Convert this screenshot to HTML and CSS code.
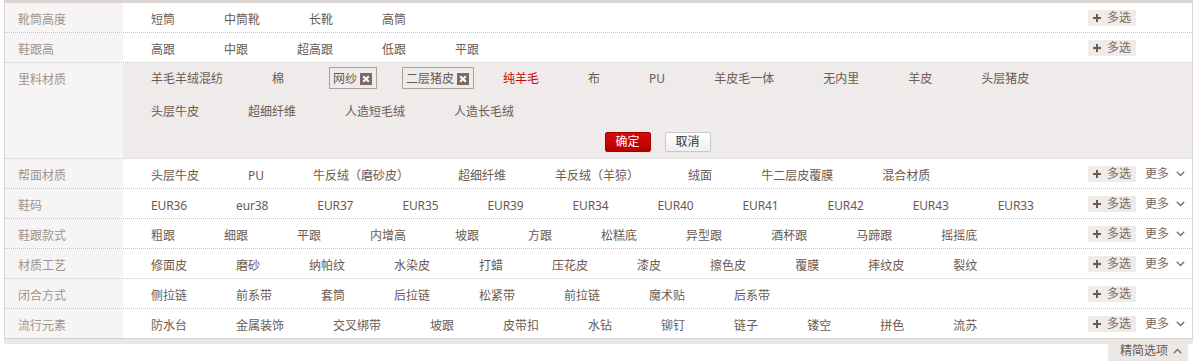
FILE: index.html
```html
<!DOCTYPE html>
<html lang="zh-CN">
<head>
<meta charset="utf-8">
<title>属性筛选</title>
<link rel="stylesheet" href="styles.css">
</head>
<body>
<div class="filter">
  <div class="row">
    <div class="label">靴筒高度</div>
    <div class="vals"><a>短筒</a><a>中筒靴</a><a>长靴</a><a>高筒</a></div>
    <div class="acts"><span class="multi"><svg class="plus" width="8" height="8" viewBox="0 0 8 8"><path d="M3 0h2v3h3v2H5v3H3V5H0V3h3z"/></svg>多选</span></div>
  </div>
  <div class="row">
    <div class="label">鞋跟高</div>
    <div class="vals"><a>高跟</a><a>中跟</a><a>超高跟</a><a>低跟</a><a>平跟</a></div>
    <div class="acts"><span class="multi"><svg class="plus" width="8" height="8" viewBox="0 0 8 8"><path d="M3 0h2v3h3v2H5v3H3V5H0V3h3z"/></svg>多选</span></div>
  </div>
  <div class="row open">
    <div class="label">里料材质</div>
    <div class="exp">
      <div class="vals">
        <a>羊毛羊绒混纺</a><a>棉</a>
        <a class="sel">网纱<svg class="x" width="12" height="12" viewBox="0 0 12 12"><rect width="12" height="12"/><path d="M3.2 3.2l5.6 5.6M8.8 3.2l-5.6 5.6"/></svg></a>
        <a class="sel">二层猪皮<svg class="x" width="12" height="12" viewBox="0 0 12 12"><rect width="12" height="12"/><path d="M3.2 3.2l5.6 5.6M8.8 3.2l-5.6 5.6"/></svg></a>
        <a class="hot">纯羊毛</a><a>布</a><a>PU</a><a>羊皮毛一体</a><a>无内里</a><a>羊皮</a><a>头层猪皮</a>
        <a>头层牛皮</a><a>超细纤维</a><a>人造短毛绒</a><a>人造长毛绒</a>
      </div>
      <div class="btns"><button class="ok">确定</button><button class="cancel">取消</button></div>
    </div>
  </div>
  <div class="row">
    <div class="label">帮面材质</div>
    <div class="vals"><a>头层牛皮</a><a>PU</a><a>牛反绒（磨砂皮）</a><a>超细纤维</a><a>羊反绒（羊猄）</a><a>绒面</a><a>牛二层皮覆膜</a><a>混合材质</a></div>
    <div class="acts"><span class="multi"><svg class="plus" width="8" height="8" viewBox="0 0 8 8"><path d="M3 0h2v3h3v2H5v3H3V5H0V3h3z"/></svg>多选</span><span class="more">更多<svg class="chev" width="9" height="6" viewBox="0 0 9 6"><path d="M0.8 0.8L4.5 4.5L8.2 0.8"/></svg></span></div>
  </div>
  <div class="row">
    <div class="label">鞋码</div>
    <div class="vals latin"><a>EUR36</a><a>eur38</a><a>EUR37</a><a>EUR35</a><a>EUR39</a><a>EUR34</a><a>EUR40</a><a>EUR41</a><a>EUR42</a><a>EUR43</a><a>EUR33</a></div>
    <div class="acts"><span class="multi"><svg class="plus" width="8" height="8" viewBox="0 0 8 8"><path d="M3 0h2v3h3v2H5v3H3V5H0V3h3z"/></svg>多选</span><span class="more">更多<svg class="chev" width="9" height="6" viewBox="0 0 9 6"><path d="M0.8 0.8L4.5 4.5L8.2 0.8"/></svg></span></div>
  </div>
  <div class="row">
    <div class="label">鞋跟款式</div>
    <div class="vals"><a>粗跟</a><a>细跟</a><a>平跟</a><a>内增高</a><a>坡跟</a><a>方跟</a><a>松糕底</a><a>异型跟</a><a>酒杯跟</a><a>马蹄跟</a><a>摇摇底</a></div>
    <div class="acts"><span class="multi"><svg class="plus" width="8" height="8" viewBox="0 0 8 8"><path d="M3 0h2v3h3v2H5v3H3V5H0V3h3z"/></svg>多选</span><span class="more">更多<svg class="chev" width="9" height="6" viewBox="0 0 9 6"><path d="M0.8 0.8L4.5 4.5L8.2 0.8"/></svg></span></div>
  </div>
  <div class="row">
    <div class="label">材质工艺</div>
    <div class="vals"><a>修面皮</a><a>磨砂</a><a>纳帕纹</a><a>水染皮</a><a>打蜡</a><a>压花皮</a><a>漆皮</a><a>擦色皮</a><a>覆膜</a><a>摔纹皮</a><a>裂纹</a></div>
    <div class="acts"><span class="multi"><svg class="plus" width="8" height="8" viewBox="0 0 8 8"><path d="M3 0h2v3h3v2H5v3H3V5H0V3h3z"/></svg>多选</span><span class="more">更多<svg class="chev" width="9" height="6" viewBox="0 0 9 6"><path d="M0.8 0.8L4.5 4.5L8.2 0.8"/></svg></span></div>
  </div>
  <div class="row">
    <div class="label">闭合方式</div>
    <div class="vals"><a>侧拉链</a><a>前系带</a><a>套筒</a><a>后拉链</a><a>松紧带</a><a>前拉链</a><a>魔术贴</a><a>后系带</a></div>
    <div class="acts"><span class="multi"><svg class="plus" width="8" height="8" viewBox="0 0 8 8"><path d="M3 0h2v3h3v2H5v3H3V5H0V3h3z"/></svg>多选</span></div>
  </div>
  <div class="row">
    <div class="label">流行元素</div>
    <div class="vals"><a>防水台</a><a>金属装饰</a><a>交叉绑带</a><a>坡跟</a><a>皮带扣</a><a>水钻</a><a>铆钉</a><a>链子</a><a>镂空</a><a>拼色</a><a>流苏</a></div>
    <div class="acts"><span class="multi"><svg class="plus" width="8" height="8" viewBox="0 0 8 8"><path d="M3 0h2v3h3v2H5v3H3V5H0V3h3z"/></svg>多选</span><span class="more">更多<svg class="chev" width="9" height="6" viewBox="0 0 9 6"><path d="M0.8 0.8L4.5 4.5L8.2 0.8"/></svg></span></div>
  </div>
</div>
<div class="foot">
  <div class="band"></div>
  <span class="tab">精简选项<svg class="chev" width="9" height="6" viewBox="0 0 9 6"><path d="M0.8 5.2L4.5 1.5L8.2 5.2"/></svg></span>
  <div class="band end"></div>
</div>
</body>
</html>
```

FILE: styles.css
```css
* {
  box-sizing: border-box;
  margin: 0;
  padding: 0;
}

body {
  background: #fff;
  font-family: "Noto Sans", "Noto Sans CJK SC", sans-serif;
  font-size: 12px;
  color: #6b5a52;
}

.filter {
  margin-left: 4px;
  width: 1189px;
  border-top: 3px solid #dbd5d1;
  border-left: 1px solid #dbd5d1;
  border-right: 1px solid #dbd5d1;
}

.row {
  display: flex;
  border-bottom: 1px dotted #c9c0bb;
}

.row:last-child {
  border-bottom: 0;
}

.label {
  width: 118px;
  flex: none;
  background: #f6f4f4;
  color: #a0948e;
  padding: 4px 0 0 13px;
  line-height: 25px;
}

.vals {
  flex: 1;
  display: flex;
  flex-wrap: wrap;
  column-gap: 49px;
  padding: 4px 0 0 28px;
  line-height: 25px;
  white-space: nowrap;
}

.vals.latin {
  letter-spacing: -0.12px;
}

.vals a {
  color: #6b5a52;
}

.vals a.hot {
  color: #cc0000;
}

.acts {
  width: 104px;
  flex: none;
  display: flex;
  align-items: center;
  padding-top: 1px;
}

.multi {
  display: flex;
  align-items: center;
  gap: 6px;
  width: 48px;
  height: 16px;
  padding-left: 5px;
  background: #eeebe9;
  color: #7a6a62;
  line-height: 16px;
}

.plus {
  fill: #6b5a52;
}

.more {
  display: flex;
  align-items: center;
  gap: 7px;
  margin-left: 9px;
  color: #7a6a62;
  line-height: 16px;
}

.chev {
  fill: none;
  stroke: #7a6a62;
  stroke-width: 1.3;
}

.exp {
  flex: 1;
  background: #efebea;
  padding: 4px 0 6px;
}

.open .vals {
  padding: 0 104px 0 28px;
  line-height: 20px;
  row-gap: 11px;
}

.open .vals a {
  height: 22px;
  padding-top: 2px;
}

.vals a.sel {
  display: flex;
  align-items: center;
  gap: 3px;
  line-height: 20px;
  padding: 1px 4px 0 3px;
  margin-left: -4px;
  margin-right: -20px;
  border: 1px solid #aca19b;
}

.x rect {
  fill: #7b6b63;
}

.x path {
  stroke: #fff;
  stroke-width: 2;
}

.btns {
  display: flex;
  justify-content: center;
  gap: 14px;
  margin-top: 10px;
}

.btns button {
  width: 46px;
  height: 20px;
  font: inherit;
  line-height: 18px;
  border-radius: 2px;
  cursor: pointer;
}

.btns .ok {
  color: #fff;
  background: linear-gradient(#d80a0a, #b70000);
  border: 1px solid #a30000;
}

.btns .cancel {
  color: #333;
  background: linear-gradient(#ffffff, #efefef);
  border: 1px solid #c9c9c9;
}

.foot {
  display: flex;
  align-items: flex-start;
  margin-left: 4px;
  width: 1189px;
}

.band {
  flex: 1;
  height: 6px;
  background: #ece8e6;
  border-top: 1px solid #d6d0cc;
}

.band.end {
  flex: none;
  width: 5px;
}

.tab {
  display: flex;
  align-items: center;
  gap: 5px;
  height: 23px;
  padding: 2px 6px 0 12px;
  background: #ece8e6;
  border-top: 1px solid #d6d0cc;
  color: #6b5a52;
  font-size: 12px;
  line-height: 18px;
}
```
